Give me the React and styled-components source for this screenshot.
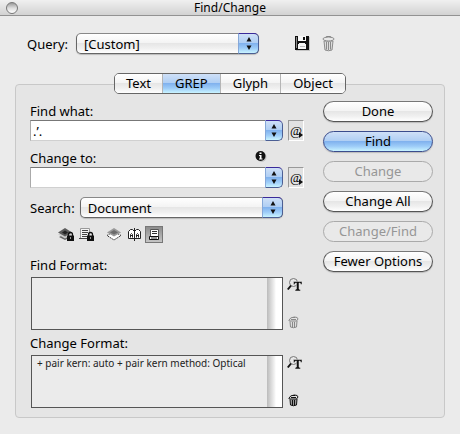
import React, { useState } from "react";
import styled, { createGlobalStyle, css } from "styled-components";

const GlobalStyle = createGlobalStyle`
  * {
    box-sizing: border-box;
  }

  body {
    margin: 0;
    background: #ebebeb;
    color: #000;
    font: 13px/16px "Noto Sans", "Lucida Grande", sans-serif;
  }

  button, input, select {
    margin: 0;
    padding: 0;
    border: 0;
    color: inherit;
    font: inherit;
  }
`;

const white = "linear-gradient(#fff 0%, #f4f4f4 45%, #e6e6e6 50%, #f0f0f0 75%, #fff 100%)";
const aqua = "linear-gradient(#cfe0f7 0%, #b0cff4 45%, #81b2ee 50%, #9dccf8 75%, #c9f4ff 100%)";

const Window = styled.main`
  min-height: 100vh;
  padding-bottom: 16px;
`;

const TitleBar = styled.header`
  display: grid;
  grid-template-columns: 16px 1fr 16px;
  align-items: center;
  height: 16px;
  padding: 0 4px;
  border-bottom: 1px solid #929292;
  background: linear-gradient(#f0f0f0, #d2d2d2);
`;

const Title = styled.h1`
  margin: 0;
  font-size: 12px;
  font-weight: 400;
  line-height: 15px;
  text-align: center;
`;

const CloseButton = styled.button`
  width: 12px;
  height: 12px;
  margin-left: 2px;
  border: 1px solid #777;
  border-radius: 50%;
  background: linear-gradient(#999, #ddd 50%, #fff);
`;

const QueryRow = styled.div`
  display: flex;
  align-items: center;
  margin: 17px 0 19px 27px;
`;

const Label = styled.label`
  display: block;
`;

const SelectWrap = styled.div`
  position: relative;
  flex: ${(p) => (p.$width ? `0 1 ${p.$width}` : "1")};
  margin-left: ${(p) => p.$gap};
  height: 21px;
`;

const Popup = styled.select`
  appearance: none;
  display: block;
  width: 100%;
  height: 21px;
  padding: 0 22px 0 7px;
  border: 1px solid #666;
  border-top-color: #888;
  border-radius: 5px;
  background: ${white};
  box-shadow: 0 1px 1px #bbb;
`;

const capStyle = css`
  display: flex;
  align-items: center;
  justify-content: center;
  height: 21px;
  border: 1px solid #4c5f94;
  border-top-color: #3a2a9a;
  border-left-color: #86a8d8;
  border-radius: 0 5px 5px 0;
  background: ${aqua};
`;

/* Sits over the right end of the select. */
const PopupCap = styled.span`
  ${capStyle}
  position: absolute;
  top: 0;
  right: 0;
  width: 21px;
  pointer-events: none;
`;

const QueryTools = styled.div`
  display: flex;
  gap: 9px;
  margin-left: 35px;
`;

const IconButton = styled.button`
  display: flex;
  align-items: center;
  justify-content: center;
  width: ${(p) => p.$w || 17}px;
  height: ${(p) => p.$h || 17}px;
  background: none;
`;

const Tabs = styled.div`
  position: relative;
  display: flex;
  justify-content: center;
  width: max-content;
  height: 21px;
  margin: 0 auto -10px;
  overflow: hidden;
  border: 1px solid #666;
  border-radius: 5px;
`;

const Tab = styled.button`
  padding: 0 12px;
  border-left: 1px solid #b5b5b5;
  background: ${(p) => (p.$active ? aqua : white)};
  line-height: 19px;

  &:first-child {
    padding: 0 11px;
    border-left: 0;
  }
`;

const Panel = styled.section`
  display: grid;
  grid-template-columns: minmax(0, 1fr) 110px;
  gap: 19px;
  margin: 0 15px;
  padding: 16px 11px 9px 14px;
  border: 1px solid #c8c8c8;
  border-radius: 4px;
  background: #e5e5e5;
`;

const Fields = styled.div`
  padding-top: 2px;
`;

const Field = styled.div`
  margin-bottom: 9px;
`;

const LabelRow = styled.div`
  display: flex;
  justify-content: space-between;
  padding-right: 37px;
  margin-bottom: 1px;
`;

const Row = styled.div`
  display: grid;
  grid-template-columns: minmax(0, 1fr) 17px;
  gap: 4px;
`;

const Combo = styled.div`
  display: flex;
  height: 21px;
`;

const ComboInput = styled.input`
  flex: 1;
  min-width: 0;
  padding: 0 2px;
  border: 1px solid #aaa;
  border-top-color: #777;
  border-right: 0;
  border-bottom-color: #d0d0d0;
  background: #fff;
`;

const ComboCap = styled.button`
  ${capStyle}
  width: 18px;
`;

const MetaButton = styled(IconButton)`
  position: relative;
  width: 16px;
  height: 21px;
  justify-self: end;
  border: 1px solid #fff;
  border-top-color: #999;
  border-left-color: #999;
  background: #e2e2e2;
  font: 13px/17px "Liberation Serif", serif;

  svg {
    position: absolute;
    right: 0;
    bottom: 2px;
  }
`;

const SearchRow = styled.div`
  display: flex;
  align-items: center;
  padding-right: 21px;
`;

const Toggles = styled.div`
  display: flex;
  align-items: center;
  margin: 8px 0 14px 27px;
  gap: 2px;
`;

const Toggle = styled(IconButton)`
  width: 18px;
  height: 17px;
  border: 1px solid ${(p) => (p.$on ? "#777" : "transparent")};
  background: ${(p) => (p.$on ? "linear-gradient(#8c8c8c, #c4c4c4)" : "none")};
`;

const Spacer = styled.span`
  width: 6px;
`;

const FormatGroup = styled.section`
  margin-top: ${(p) => (p.$next ? 5 : 0)}px;
`;

const FormatTitle = styled.h2`
  margin: 0 0 4px;
  font-size: 13px;
  font-weight: 400;
  line-height: 16px;
`;

const FormatBox = styled.div`
  display: flex;
  justify-content: space-between;
  height: 53px;
  margin-left: 1px;
  border: 1px solid #555;
  background: #ebebeb;
`;

const FormatText = styled.p`
  margin: 0;
  padding: 1px 0 1px 5px;
  color: #222;
  font-size: 10px;
  line-height: 12px;
`;

const Track = styled.span`
  flex: 0 0 15px;
  background: linear-gradient(90deg, #bbb, #f2f2f2 50%, #fff 60%, #fff);
`;

const FormatTools = styled.div`
  display: flex;
  flex-direction: column;
  justify-content: space-between;
`;

const Actions = styled.div`
  display: flex;
  flex-direction: column;
  gap: 9px;
`;

const Action = styled.button`
  height: 21px;
  border: 1px solid #555;
  border-top-color: #777;
  border-radius: 11px;
  background: ${(p) => (p.$primary ? aqua : white)};
  box-shadow: 0 1px 1px #bbb;
  line-height: 19px;
  white-space: nowrap;

  ${(p) => p.$primary && css`
    border-color: #3a4c8c;
  `}

  &:disabled {
    border-color: #aaa;
    background: #e9e9e9;
    box-shadow: none;
    color: #969696;
  }
`;

const Arrows = () => (
  <svg width="6" height="13" viewBox="0 0 6 13" aria-hidden="true">
    <path d="M3 0 5.5 4.5h-5zM3 13 5.5 8.5h-5z" fill="#111" />
  </svg>
);

const SaveIcon = () => (
  <svg width="17" height="17" viewBox="0 0 17 17" shapeRendering="crispEdges" aria-hidden="true">
    <path d="M2 2h14v14H2z" fill="#aaa" opacity=".6" />
    <path d="M1 1h13l1 1v13H1z" fill="#111" />
    <path d="M2 2h1v11H2z" fill="#888" />
    <path d="M4 1h8v5H4z" fill="#f8f8f8" />
    <path d="M9 2h2v3H9z" fill="#111" />
    <path d="M5 8h6v1h1v5H4V9h1z" fill="#f4f4f4" />
    <path d="M6 11h5v1H6z" fill="#bbb" />
  </svg>
);

const QueryTrashIcon = () => (
  <svg width="15" height="17" viewBox="0 0 15 17" fill="none" aria-hidden="true">
    <path d="M3 6 4 15q3.500 1.500 7 0l1-9z" fill="#ddd" stroke="#8b8b8b" />
    <path d="M5.500 7v7.500M7.500 7v8M9.500 7v7.500" stroke="#8b8b8b" />
    <ellipse cx="7.500" cy="4" rx="5.500" ry="2" fill="#e8e8e8" stroke="#858585" />
    <path d="M5.500 2.500v-1h4v1" stroke="#858585" />
  </svg>
);

const TrashIcon = ({ dim }) => (
  <svg width="11" height="13" viewBox="0 0 11 13" fill="none" stroke={dim ? "#888" : "#111"} aria-hidden="true">
    <path d="M2 5.500 2.500 11q3 1.500 6 0L9 5" fill={dim ? "#ddd" : "#999"} />
    <path d="M4.500 6v5.500M6.500 6v5.500" />
    <path d="M.8 4.500Q2 1 6.500 1q3.500 0 3.500 2L8.500 5H2z" fill="#e5e5e5" />
    <path d="M3 3.500h5M5 1.500h2" />
  </svg>
);

const InfoIcon = () => (
  <svg width="12" height="13" viewBox="0 0 12 13" aria-hidden="true">
    <circle cx="6.500" cy="7" r="5" fill="#aaa" opacity=".6" />
    <circle cx="5.500" cy="6" r="5" fill="#111" />
    <path d="M4.500 2.500h2V4h-2zM4 5h2.500v3.500h1v1H4v-1h.8V6H4z" fill="#fff" />
  </svg>
);

const Lock = () => (
  <>
    <path d="M10.500 9V7.500a2 2 0 0 1 4 0V9" fill="none" stroke="#111" strokeWidth="1.300" />
    <path d="M9 8.500h7V14H9z" fill="#111" />
    <path d="M12 10h1v2h-1z" fill="#999" />
  </>
);

const LockedLayersIcon = () => (
  <svg width="16" height="15" viewBox="0 0 16 15" aria-hidden="true">
    <path d="m1 10 6-3 6 3-6 3z" fill="#666" />
    <path d="m0 7.500 7-3 7 3-7 4z" fill="#ccc" />
    <path d="m0 5.500 7-4.500 7 4.500-7 4z" fill="#5c5c5c" />
    <path d="m4 5.500 3-2 3 2-3 2z" fill="#222" />
    <Lock />
  </svg>
);

const LockedStoriesIcon = () => (
  <svg width="16" height="15" viewBox="0 0 16 15" aria-hidden="true">
    <path d="M2.500 1.500h9v10h-9z" fill="#f4f4f4" stroke="#999" />
    <path d="M4 3.500h6M4 5.500h6M4 7.500h5M4 9.500h5M1 11.500h8" stroke="#444" />
    <Lock />
  </svg>
);

const HiddenLayersIcon = () => (
  <svg width="16" height="15" viewBox="0 0 16 15" aria-hidden="true">
    <path d="m1 8.500 7-4 7 4-7 4.500z" fill="#fff" stroke="#222" strokeDasharray="1.500 1" />
    <path d="m1 5.500 7-4.500 7 4.500-7 4z" fill="#999" />
    <path d="m4 5.500 4-2.500 4 2.500-4 2z" fill="#6c6c6c" />
  </svg>
);

/* A facing pair of pages with a letter A on each. */
const MasterPagesIcon = () => (
  <svg width="15" height="15" viewBox="0 0 15 15" fill="none" stroke="#222" aria-hidden="true">
    <path d="M1.500 4.500 3.500 2.500h2l2 2 2-2h2l2 2v7h-12z" fill="#fff" />
    <path d="M7.500 1v13" />
    <path d="M3.500 10.500V7.500l1-1 1 1v3M3.500 8.500h2M9.500 10.500V7.500l1-1 1 1v3M9.500 8.500h2" />
  </svg>
);

const FootnotesIcon = () => (
  <svg width="14" height="13" viewBox="0 0 14 13" aria-hidden="true">
    <path d="M3.500 1.500h8v7h-8z" fill="#fff" stroke="#555" />
    <path d="M2.500 8.500h9v3h-9z" fill="#fff" stroke="#111" />
    <path d="M5 3.500h5M5 5.500h5M4 10h6" stroke="#333" />
  </svg>
);

const MenuMark = () => (
  <svg width="4" height="6" viewBox="0 0 4 6" aria-hidden="true">
    <path d="M0 0 4 3 0 6z" fill="#111" />
  </svg>
);

const FindTypeIcon = () => (
  <svg width="15" height="14" viewBox="0 0 15 14" aria-hidden="true">
    <circle cx="6.500" cy="4.500" r="4" fill="#e8e8e8" stroke="#777" />
    <path d="M4 7.500.8 11.500" stroke="#111" strokeWidth="2" />
    <path
      d="M6.500 3.500H15v3h-1l-1-1.500h-1v6l1.500 1v1H8v-1l1.500-1V5h-1L7.500 6.500h-1z"
      fill="#111"
      stroke="#e5e5e5"
      strokeWidth=".5"
    />
  </svg>
);

const tabs = ["Text", "GREP", "Glyph", "Object"];

const actions = [
  { label: "Done" },
  { label: "Find", primary: true },
  { label: "Change", disabled: true },
  { label: "Change All" },
  { label: "Change/Find", disabled: true },
  { label: "Fewer Options" },
];

const toggles = [
  { label: "Include Locked Layers", Icon: LockedLayersIcon },
  { label: "Include Locked Stories", Icon: LockedStoriesIcon },
  null,
  { label: "Include Hidden Layers", Icon: HiddenLayersIcon },
  { label: "Include Master Pages", Icon: MasterPagesIcon },
  { label: "Include Footnotes", Icon: FootnotesIcon },
];

function PopupMenu({ id, option, width, gap }) {
  return (
    <SelectWrap $width={width} $gap={gap}>
      <Popup id={id}>
        <option>{option}</option>
      </Popup>
      <PopupCap><Arrows /></PopupCap>
    </SelectWrap>
  );
}

function ComboField({ id, label, value, info }) {
  return (
    <Field>
      <LabelRow>
        <Label htmlFor={id}>{label}</Label>
        {info && <InfoIcon />}
      </LabelRow>
      <Row>
        <Combo>
          <ComboInput id={id} type="text" defaultValue={value} />
          <ComboCap type="button" aria-label={`${label} history`}><Arrows /></ComboCap>
        </Combo>
        <MetaButton type="button" aria-label="Special characters">@<MenuMark /></MetaButton>
      </Row>
    </Field>
  );
}

function Format({ title, text, next }) {
  return (
    <FormatGroup $next={next}>
      <FormatTitle>{title}</FormatTitle>
      <Row>
        <FormatBox>
          <FormatText>{text}</FormatText>
          <Track />
        </FormatBox>
        <FormatTools>
          <IconButton type="button" $w={15} $h={15} aria-label="Specify attributes"><FindTypeIcon /></IconButton>
          <IconButton type="button" $w={13} $h={15} aria-label="Clear attributes" disabled={!text}>
            <TrashIcon dim={!text} />
          </IconButton>
        </FormatTools>
      </Row>
    </FormatGroup>
  );
}

function App() {
  const [tab, setTab] = useState("GREP");

  return (
    <Window>
      <GlobalStyle />
      <TitleBar>
        <CloseButton type="button" aria-label="Close" />
        <Title>Find/Change</Title>
      </TitleBar>
      <QueryRow>
        <Label htmlFor="query">Query:</Label>
        <PopupMenu id="query" option="[Custom]" width="183px" gap="8px" />
        <QueryTools>
          <IconButton type="button" aria-label="Save query"><SaveIcon /></IconButton>
          <IconButton type="button" aria-label="Delete query"><QueryTrashIcon /></IconButton>
        </QueryTools>
      </QueryRow>
      <Tabs role="tablist">
        {tabs.map((name) => (
          <Tab
            key={name}
            type="button"
            role="tab"
            aria-selected={tab === name}
            $active={tab === name}
            onClick={() => setTab(name)}
          >
            {name}
          </Tab>
        ))}
      </Tabs>
      <Panel>
        <Fields>
          <ComboField id="find" label="Find what:" value=".’." />
          <ComboField id="change" label="Change to:" value="" info />
          <SearchRow>
            <Label htmlFor="search">Search:</Label>
            <PopupMenu id="search" option="Document" gap="5px" />
          </SearchRow>
          <Toggles>
            {toggles.map((t) => t ? (
              <Toggle key={t.label} type="button" aria-label={t.label} $on={t.Icon === FootnotesIcon}>
                <t.Icon />
              </Toggle>
            ) : <Spacer key="gap" />)}
          </Toggles>
          <Format title="Find Format:" text="" />
          <Format title="Change Format:" text="+ pair kern: auto + pair kern method: Optical" next />
        </Fields>
        <Actions>
          {actions.map((a) => (
            <Action key={a.label} type="button" $primary={a.primary} disabled={a.disabled}>
              {a.label}
            </Action>
          ))}
        </Actions>
      </Panel>
    </Window>
  );
}

export default App;
